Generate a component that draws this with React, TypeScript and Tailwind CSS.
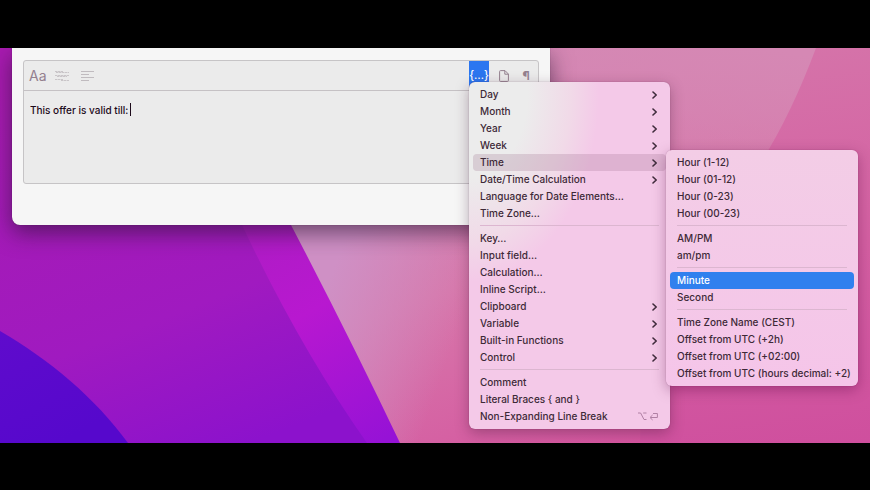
import React, { useState } from "react";

interface MenuItem {
  label: string;
  hasSubmenu?: boolean;
  shortcut?: boolean;
}

const mainGroups: MenuItem[][] = [
  [
    { label: "Day", hasSubmenu: true },
    { label: "Month", hasSubmenu: true },
    { label: "Year", hasSubmenu: true },
    { label: "Week", hasSubmenu: true },
    { label: "Time", hasSubmenu: true },
    { label: "Date/Time Calculation", hasSubmenu: true },
    { label: "Language for Date Elements…" },
    { label: "Time Zone…" },
  ],
  [
    { label: "Key…" },
    { label: "Input field…" },
    { label: "Calculation…" },
    { label: "Inline Script…" },
    { label: "Clipboard", hasSubmenu: true },
    { label: "Variable", hasSubmenu: true },
    { label: "Built-in Functions", hasSubmenu: true },
    { label: "Control", hasSubmenu: true },
  ],
  [
    { label: "Comment" },
    { label: "Literal Braces { and }" },
    { label: "Non-Expanding Line Break", shortcut: true },
  ],
];

const timeGroups: string[][] = [
  ["Hour (1-12)", "Hour (01-12)", "Hour (0-23)", "Hour (00-23)"],
  ["AM/PM", "am/pm"],
  ["Minute", "Second"],
  [
    "Time Zone Name (CEST)",
    "Offset from UTC (+2h)",
    "Offset from UTC (+02:00)",
    "Offset from UTC (hours decimal: +2)",
  ],
];

const Wallpaper = () => (
  <svg
    className="absolute inset-0 h-full w-full"
    viewBox="0 0 870 395"
    preserveAspectRatio="none"
    aria-hidden="true"
  >
    <defs>
      <linearGradient id="pink" gradientUnits="userSpaceOnUse" x1="500" y1="0" x2="640" y2="400">
        <stop offset="0" stopColor="#d488b4" />
        <stop offset="0.5" stopColor="#d777aa" />
        <stop offset="1" stopColor="#d4559f" />
      </linearGradient>
      <linearGradient id="light" gradientUnits="userSpaceOnUse" x1="760" y1="0" x2="740" y2="140">
        <stop offset="0" stopColor="#d588b4" />
        <stop offset="1" stopColor="#d588b4" stopOpacity="0" />
      </linearGradient>
      <linearGradient id="facet" gradientUnits="userSpaceOnUse" x1="800" y1="0" x2="860" y2="395">
        <stop offset="0" stopColor="#d573a9" />
        <stop offset="0.5" stopColor="#d460a2" />
        <stop offset="1" stopColor="#cf4f9e" />
      </linearGradient>
      <linearGradient id="mauve" gradientUnits="userSpaceOnUse" x1="325" y1="245" x2="455" y2="290">
        <stop offset="0" stopColor="#cf90c5" />
        <stop offset="1" stopColor="#cf90c5" stopOpacity="0" />
      </linearGradient>
      <linearGradient id="purple" gradientUnits="userSpaceOnUse" x1="100" y1="0" x2="250" y2="395">
        <stop offset="0" stopColor="#a81bb0" />
        <stop offset="0.65" stopColor="#a01ac0" />
        <stop offset="1" stopColor="#8c12cc" />
      </linearGradient>
      <linearGradient id="strip" gradientUnits="userSpaceOnUse" x1="260" y1="177" x2="380" y2="395">
        <stop offset="0" stopColor="#ae1cc4" />
        <stop offset="0.4" stopColor="#b818d0" />
        <stop offset="1" stopColor="#9612d6" />
      </linearGradient>
      <linearGradient id="blue" gradientUnits="userSpaceOnUse" x1="0" y1="284" x2="60" y2="395">
        <stop offset="0" stopColor="#5f0bcc" />
        <stop offset="1" stopColor="#5608cc" />
      </linearGradient>
    </defs>
    <path d="M0 0H870V395H0Z" fill="url(#pink)" />
    <path d="M550 0H870V150H550Z" fill="url(#light)" />
    <path d="M816 0H870V395H640Q640 260 735 150Q780 96 816 0Z" fill="url(#facet)" />
    <path d="M0 0H870V395H0Z" fill="url(#mauve)" />
    <path d="M0 0H210L291 177Q350 290 400 395H0Z" fill="url(#strip)" />
    <path d="M0 0H170L243 179Q300 300 367 395H0Z" fill="url(#purple)" />
    <path d="M0 283C50 312 95 350 128 395H0Z" fill="url(#blue)" />
  </svg>
);

const Chevron = () => (
  <svg className="h-2 w-[6px]" viewBox="0 0 6 8" fill="none" aria-hidden="true">
    <path
      d="M1 1L4.2 4L1 7"
      stroke="#3f2b3c"
      strokeWidth="1.6"
      strokeLinecap="round"
      strokeLinejoin="round"
    />
  </svg>
);

const Shortcut = () => (
  <svg className="h-[9px] w-5" viewBox="0 0 20 9" fill="none" stroke="#b080a4" aria-hidden="true">
    <path d="M0 1H2.6L6 7.5H8.5M5.2 1H8.5" />
    <path d="M15 1.5H19.4V5.5H12.5M14.6 3L12 5.5L14.6 8" />
  </svg>
);

const Separator = () => (
  <li role="separator" className="mx-[7px] flex h-2 items-start pt-[3px]">
    <span className="h-px w-full bg-[#dcb6d0]" />
  </li>
);

const TimeSubmenu = () => {
  const [active, setActive] = useState("Minute");
  return (
    <ul
      role="menu"
      aria-label="Time"
      className="absolute -top-1 left-full z-10 w-48 rounded-md bg-linear-to-b from-[#f3cde6] to-[#f5c5e9] p-1 shadow-[0_0_1px_rgba(70,0,50,0.5),0_4px_14px_rgba(80,0,60,0.35)]"
    >
      {timeGroups.map((group, index) => (
        <React.Fragment key={group[0]}>
          {index > 0 && <Separator />}
          {group.map((label) => (
            <li key={label} role="none">
              <button
                role="menuitem"
                onMouseEnter={() => setActive(label)}
                className={`flex h-[17px] w-full items-center rounded-sm px-[7px] whitespace-nowrap ${
                  active === label ? "bg-[#3080ee] text-white" : ""
                }`}
              >
                {label}
              </button>
            </li>
          ))}
        </React.Fragment>
      ))}
    </ul>
  );
};

const InsertMenu = () => (
  <ul
    role="menu"
    aria-label="Insert"
    className="absolute top-[34px] left-[469px] w-[201px] rounded-md bg-[#f4c9e8] bg-[radial-gradient(ellipse_130px_190px_at_0px_10px,#ececec_45%,#f1dae8_78%,transparent)] p-1 text-[10px] leading-[17px] font-medium text-[#3d2937] shadow-[0_0_1px_rgba(70,0,50,0.5),0_4px_14px_rgba(60,20,50,0.35)]"
  >
    {mainGroups.map((group, index) => (
      <React.Fragment key={group[0].label}>
        {index > 0 && <Separator />}
        {group.map((item) => (
          <li key={item.label} role="none" className="relative">
            <button
              role="menuitem"
              aria-haspopup={item.hasSubmenu ? "menu" : undefined}
              className={`flex h-[17px] w-full items-center justify-between rounded-sm pr-[8px] pl-[7px] whitespace-nowrap ${
                item.label === "Time" ? "bg-[#9b6f8b]/25" : ""
              }`}
            >
              {item.label}
              {item.hasSubmenu && <Chevron />}
              {item.shortcut && <Shortcut />}
            </button>
            {item.label === "Time" && <TimeSubmenu />}
          </li>
        ))}
      </React.Fragment>
    ))}
  </ul>
);

const Toolbar = () => (
  <div className="flex h-[30px] items-stretch border-b border-[#c5c1c4] px-[5px] text-[#94808f]">
    <button className="w-[26px] text-left text-sm" aria-label="Font">
      Aa
    </button>
    <button className="flex w-[26px] items-center" aria-label="Style">
      <svg className="h-3 w-[14px]" viewBox="0 0 14 12" fill="none" stroke="#c9c5c8" aria-hidden="true">
        <path d="M0 1.5H8M1 2.5H14M0 5.5H14M2 6.5H12M0 9.5H8M6 10.5H14" strokeDasharray="2.5 0.5" />
      </svg>
    </button>
    <button className="flex items-center" aria-label="Alignment">
      <svg className="h-3 w-[13px]" viewBox="0 0 13 12" fill="none" stroke="#c0bbbf" aria-hidden="true">
        <path d="M0 1.5H13M0 4.5H8M0 7.5H13M0 10.5H8" />
      </svg>
    </button>
    <button
      className="ml-auto w-5 bg-[#2b76f0] text-center text-[11px] font-medium text-white"
      aria-label="Insert macro"
    >
      {"{…}"}
    </button>
    <button className="flex w-[30px] items-center justify-center" aria-label="Insert file">
      <svg className="h-3 w-[10px]" viewBox="0 0 10 12" fill="none" stroke="#94808f" aria-hidden="true">
        <path d="M1.5 0.6H6L9.4 4V10.5Q9.4 11.4 8.5 11.4H1.5Q0.6 11.4 0.6 10.5V1.5Q0.6 0.6 1.5 0.6ZM5.8 0.8V4.2H9.2" />
      </svg>
    </button>
    <button className="w-[14px] text-center text-xs font-bold" aria-label="Show invisibles">
      ¶
    </button>
  </div>
);

const EditorWindow = () => (
  <section className="absolute top-0 left-3 w-[538px] rounded-b-lg bg-[#f6f6f6] px-[11px] pt-3 pb-[41px] shadow-[0_0_1px_rgba(40,0,40,0.6),0_8px_22px_rgba(40,20,50,0.6)]">
    <div className="rounded-[3px] border border-[#c6c4c6] bg-[#ebebeb]">
      <Toolbar />
      <div className="flex h-[92px] items-start px-[6px] pt-3">
        <textarea
          rows={1}
          aria-label="Snippet content"
          defaultValue="This offer is valid till:"
          className="field-sizing-content resize-none overflow-hidden text-[10px] leading-[14px] font-medium text-[#1d0a1a] outline-none"
        />
        <span className="ml-[2px] h-[13px] w-px bg-[#1d0a1a]" />
      </div>
    </div>
  </section>
);

const App: React.FC = () => {
  return (
    <div className="flex h-screen flex-col bg-black pt-12 pb-[47px] font-[Inter,Roboto,'Liberation_Sans',sans-serif]">
      <main className="relative flex-1 overflow-hidden">
        <Wallpaper />
        <EditorWindow />
        <InsertMenu />
      </main>
    </div>
  );
};

export default App;
